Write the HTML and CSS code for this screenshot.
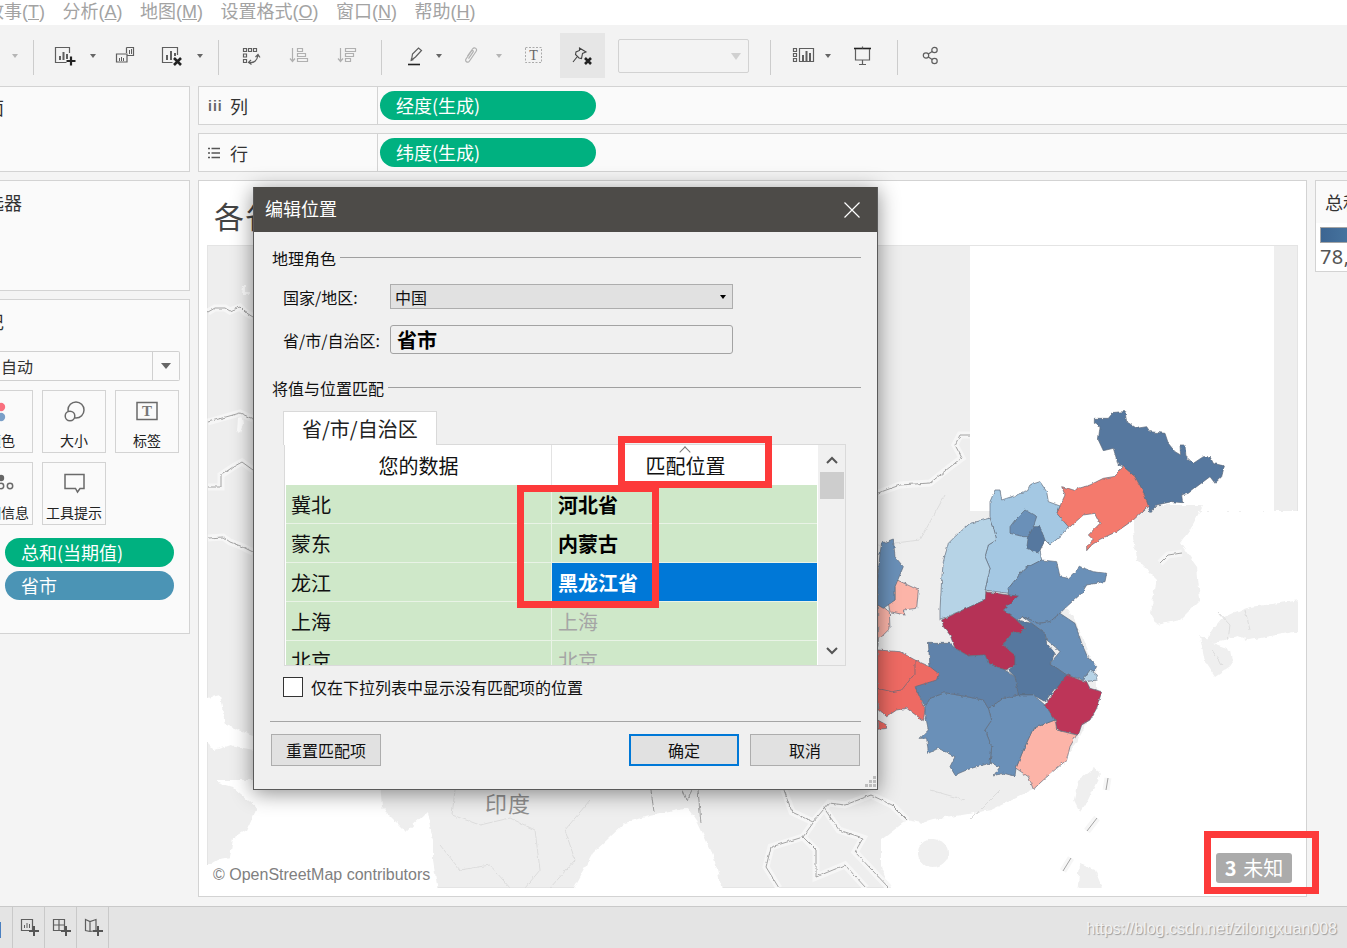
FILE: index.html
```html
<!DOCTYPE html>
<html lang="zh">
<head>
<meta charset="utf-8">
<title>编辑位置</title>
<link rel="stylesheet" href="styles.css">
</head>
<body>
<nav class="menu">
  <span class="menu-first">故事(<u>T</u>)</span><span>分析(<u>A</u>)</span><span>地图(<u>M</u>)</span><span>设置格式(<u>O</u>)</span><span>窗口(<u>N</u>)</span><span>帮助(<u>H</u>)</span>
</nav>

<div class="toolbar">
  <i class="arr g10 dim"></i>
  <b class="sep g13"></b>
  <svg class="ico g15" viewBox="0 0 30 30"><path class="s" d="M20.500 13V7.500h-14v15h11"/><path class="f" d="M10 16h2v4h-2zM13.500 12h2v8h-2zM17 14h2v5h-2z"/><path class="k" d="M22 16.500v9M17.500 21h9"/></svg>
  <i class="arr g9"></i>
  <svg class="ico g11" viewBox="0 0 30 30"><path class="s" d="M17.500 7.500h7v8h-6M17.500 13V7.500M7.500 14h10.500v8h-10.500z"/><path class="f" d="M20 10h1v4h-1zM22 9h1v5h-1zM10 18h1v3h-1zM12 17h1v4h-1zM14 18h1v3h-1z"/></svg>
  <svg class="ico g16" viewBox="0 0 30 30"><path class="s" d="M22.500 15V7.500h-15v15h10"/><path class="f" d="M11 15h2v5h-2zM15 11h2v9h-2zM19 13h2v3h-2z"/><path class="k x" d="M19 18l7 7M26 18l-7 7"/></svg>
  <i class="arr g10"></i>
  <b class="sep g13"></b>
  <svg class="ico g16" viewBox="0 0 30 30"><path class="s" d="M8.500 8.500h3v3h-3zM13.500 8.500h3v3h-3zM18.500 8.500h3v3h-3zM8.500 14h3v3h-3zM8.500 19.500h3v3h-3zM14 22.500c5 1 8-2 9-7M20.500 17l2.500-2.500 2 3M16 20l-2.500 2.500 3 2"/></svg>
  <svg class="ico g18 faint" viewBox="0 0 30 30"><path class="s" d="M9.500 8v13M7 18.500l2.500 3 2.500-3M14.500 8.500h5v3h-5zM14.500 13.500h8v3h-8zM14.500 18.500h10v3h-10z"/></svg>
  <svg class="ico g18 faint" viewBox="0 0 30 30"><path class="s" d="M9.500 8v13M7 18.500l2.500 3 2.500-3M14.500 8.500h10v3h-10zM14.500 13.500h8v3h-8zM14.500 18.500h5v3h-5z"/></svg>
  <b class="sep g20"></b>
  <svg class="ico g16" viewBox="0 0 30 30"><path class="s" d="M13.500 20l1-6 6-6 3 2.500-6 6.500z"/><path class="f" d="M13 18l3 2-3.500 1z"/><path class="k thin" d="M10 24.500h12"/></svg>
  <i class="arr g6"></i>
  <svg class="ico g12 faint" viewBox="0 0 30 30"><path class="s" d="M11.500 16l5-7c2-2.500 5.500 0 3.500 2.500l-6.500 9.500c-1.500 2.500-5 .5-3.500-2l5.500-8c1-1.200 2.500 0 1.500 1.200l-4.500 6.500"/></svg>
  <i class="arr g8 dim"></i>
  <svg class="ico g14" viewBox="0 0 30 30"><rect class="dash" x="7.500" y="7.500" width="16" height="15"/><text class="ico-t" x="15.500" y="20">T</text></svg>
  <span class="pin g12"><svg class="pin-ico" viewBox="0 0 45 45"><path class="s thin-s" d="M19.500 15l6.500 4-3.500 1.500-1 5-2.500-.5-3.500-3.500.5-2.500 3.500-1.500zM17 24l-4 5"/><path class="k x" d="M25 25l6 6M31 25l-6 6"/></svg></span>
  <span class="tb-select g13"><i class="tb-caret"></i></span>
  <b class="sep g21"></b>
  <svg class="ico g17" viewBox="0 0 30 30"><path class="s" d="M5.500 8.500h3v3h-3zM5.500 13.500h3v3h-3zM5.500 18.500h3v3h-3zM11.500 8.500h14v13h-14z"/><path class="f" d="M14 15h2v6h-2zM17.500 11h2v10h-2zM21 13h2v8h-2z"/></svg>
  <i class="arr g5"></i>
  <svg class="ico g14" viewBox="0 0 30 30"><path class="k thin" d="M7 8.500h17"/><path class="s" d="M8.500 9v11h14V9M15.500 20v4.500M12 24.500h7M15.500 6.500v2"/></svg>
  <b class="sep g20"></b>
  <svg class="ico g17" viewBox="0 0 30 30"><circle class="s" cx="11" cy="15.500" r="2.700"/><circle class="s" cx="19.500" cy="10" r="2.700"/><circle class="s" cx="19.500" cy="21" r="2.700"/><path class="s" d="M13.300 14l3.900-2.600M13.300 17l3.900 2.600"/></svg>
</div>

<main class="main">
  <aside class="left">
    <section class="panel p-pages"><div class="clip-title">页面</div></section>
    <section class="panel p-filters"><div class="clip-title ft">筛选器</div></section>
    <section class="panel p-marks">
      <div class="clip-title mk">标记</div>
      <div class="mark-select"><span>自动</span><i class="ms-arrow"></i></div>
      <div class="mark-grid">
        <div class="mark-btn">
          <svg class="mi" viewBox="0 0 30 26"><circle class="c-r" cx="15" cy="7" r="4.200"/><circle class="c-b" cx="15" cy="17" r="4.200"/></svg>
          <span>颜色</span>
        </div>
        <div class="mark-btn">
          <svg class="mi" viewBox="0 0 30 26"><circle class="s2" cx="17" cy="10" r="8"/><circle class="s2 wb" cx="11" cy="16" r="4.800"/></svg>
          <span>大小</span>
        </div>
        <div class="mark-btn">
          <svg class="mi" viewBox="0 0 30 26"><rect class="s2" x="5" y="2.500" width="20" height="17"/><text class="mi-t" x="15" y="16">T</text></svg>
          <span>标签</span>
        </div>
        <div class="mark-btn">
          <svg class="mi" viewBox="0 0 30 26"><circle class="c-g" cx="15" cy="6" r="3.200"/><circle class="s2" cx="15" cy="14" r="2.700"/><circle class="s2" cx="24" cy="14" r="2.700"/><circle class="s2" cx="6" cy="14" r="2.700"/></svg>
          <span>详细信息</span>
        </div>
        <div class="mark-btn">
          <svg class="mi" viewBox="0 0 30 26"><path class="s2" d="M6 2.500h19v14h-4l-2.500 3.500-2-3.500h-10.500z"/></svg>
          <span>工具提示</span>
        </div>
      </div>
      <div class="pill green mark-pill">总和(当期值)</div>
      <div class="pill blue mark-pill">省市</div>
    </section>
  </aside>

  <div class="right">
    <div class="shelf">
      <div class="shelf-label"><span class="sh-ic">iii</span><span>列</span></div>
      <div class="pill green shelf-pill">经度(生成)</div>
    </div>
    <div class="shelf">
      <div class="shelf-label"><svg class="sh-svg" viewBox="0 0 12 12"><path d="M0 1.500h2M3.500 1.500h8.500M0 6h2M3.500 6h8.500M0 10.500h2M3.500 10.500h8.500"/></svg><span>行</span></div>
      <div class="pill green shelf-pill">纬度(生成)</div>
    </div>

    <div class="view-row">
      <section class="view">
        <h1 class="view-title">各省市</h1>
        <div class="map">
          <svg class="map-svg" viewBox="207 245 1091 643" width="1091" height="643">
            <defs>
              <filter id="rough" x="-5%" y="-5%" width="110%" height="110%" filterUnits="objectBoundingBox">
                <feTurbulence type="fractalNoise" baseFrequency=".16" numOctaves="2" seed="4" result="n"/>
                <feDisplacementMap in="SourceGraphic" in2="n" scale="5" xChannelSelector="R" yChannelSelector="G"/>
              </filter>
              <filter id="rough2" x="-5%" y="-5%" width="110%" height="110%">
                <feTurbulence type="fractalNoise" baseFrequency=".22" numOctaves="2" seed="9" result="n"/>
                <feDisplacementMap in="SourceGraphic" in2="n" scale="3" xChannelSelector="R" yChannelSelector="G"/>
              </filter>
            </defs>
            <rect class="land" x="207.500" y="245.500" width="1090" height="642"/>
            <g class="sea" filter="url(#rough)">
              <path d="M1040 511H1320V910H899L881 867 881 840 907 820 923 823 933 820 991 810 1033 790 1075 745 1098 700 1096 670 1075 620 1060 600 1040 560z"/>
              <path d="M562 910L593 853 625 823 641 818 688 808 698 823 714 857 727 910z"/>
              <path d="M217 782L233 787 257 808 247 830 233 838 230 857 217 860 200 870 200 910H441L433 860 433 840 427 812 406 832 382 808 380 780H217z"/>
              <path d="M200 700L220 695 225 725 253 735 253 750 230 745 215 750 200 735z"/>
              <path d="M243 286h2v6h5v2h-8zM238 418l4-1 1 7-3 9-3-2z"/>
            </g>
            <rect class="tile" x="970" y="246" width="304" height="265"/>
            <g class="land-fill" filter="url(#rough)">
              <path d="M1133 505H1203L1190 530 1180 543 1197 567 1200 600 1180 620 1157 625 1150 613 1157 580 1137 560 1133 530z"/>
              <path d="M1330 596L1250 607 1235 612 1222 618 1212 630 1203 645 1225 640 1238 636 1250 640 1330 625z"/>
              <path d="M1200 636L1218 646 1230 650 1233 665 1215 677 1205 662z"/>
              <path d="M1243 626L1258 622 1260 634 1245 642z"/>
              <path d="M1095 767L1100 775 1088 800 1080 812 1074 800 1078 780z"/>
              <path d="M1080 864L1095 870 1105 895H1077z"/>
              <ellipse cx="933" cy="853" rx="15" ry="14"/>
            </g>
            <g class="halo">
              <path id="b1" d="M208 312L215 308 225 308 230 311 240 307 245 312 253 317"/>
              <path id="b2" d="M208 422L240 413 253 419"/>
              <path id="b3" d="M208 487L221 487 221 475 233 467 242 462 253 470"/>
              <path id="b4" d="M208 538L223 537 230 542 243 547 253 552"/>
              <path id="b5" d="M878 493L900 485 930 483 950 467 962 458 955 445 960 435 970 435"/>
              <path id="b6" d="M784 790L792 812 813 822 829 803 845 805 871 795 892 805 907 820"/>
              <path id="b7" d="M813 823L803 837 771 847 766 867 779 888"/>
              <path id="b8" d="M824 808L839 830 863 838 855 852 889 888"/>
              <path id="b9" d="M803 837L816 850 816 877 845 865 866 888"/>
              <path id="b10" d="M1160 563L1168 555 1182 553"/>
              <path id="b11" d="M1097 818L1087 831M1071 858L1063 871M1108 778L1106 790"/>
            </g>
            <g class="border" filter="url(#rough2)">
              <use href="#b1"/><use href="#b2"/><use href="#b3"/><use href="#b4"/><use href="#b5"/><use href="#b6"/><use href="#b7"/><use href="#b8"/><use href="#b9"/><use href="#b10"/>
              <path d="M651 790L654 812M698 790L701 823M683 790L687 800 692 790"/>
            </g>
            <use class="border" href="#b11"/>
            <g class="border-light" filter="url(#rough2)">
              <path d="M455 790L452 815 480 825 510 818 535 830 540 870 525 888M590 800L565 830 575 860 550 888M440 845L460 870 490 865 510 888M1000 790L970 820M930 790L965 800M878 545L920 540 945 495"/>
              <path d="M1218 612L1230 625 1228 640M1245 610L1250 630M1212 650L1222 665"/>
            </g>
            <text class="map-label" x="485" y="812">印度</text>
            <g filter="url(#rough2)">
            <g class="prov" transform="translate(860 380) scale(.33333)">
              <path class="c-dk" d="M703 115L745 115 760 97 795 95 800 125 830 145 860 140 870 155 915 160 925 190 945 215 962 225 960 195 975 195 978 230 1000 250 1030 230 1050 230 1060 250 1093 258 1085 290 1065 310 1050 290 1010 320 985 340 965 345 968 368 935 365 890 375 870 398 850 335 825 290 790 260 775 255 760 205 730 212 715 180 720 140 703 130z"/>
              <path class="c-sal" d="M600 378L615 345 605 320 625 325 640 330 690 315 730 295 760 290 790 260 825 290 850 335 865 378 820 420 770 455 720 478 695 495 680 512 680 500 700 480 685 465 720 430 705 400 670 405 625 445 590 400z"/>
              <path class="c-lt" d="M390 365L405 330 420 330 425 360 470 345 500 335 510 315 540 305 560 335 565 365 600 378 590 400 625 440 600 470 570 495 555 480 540 510 545 540 490 570 445 625 445 640 375 630 390 565 375 530 385 495 410 480 400 440 390 410z"/>
              <path class="c-ltr" d="M250 545L265 490 290 465 330 430 390 415 400 440 410 480 385 495 375 530 390 565 375 630 375 660 320 685 240 718 240 690 245 600z"/>
              <path class="c-md" d="M450 440L465 420 495 390 530 410 520 440 525 470 490 470 450 460z"/>
              <path class="c-dk" d="M520 440L540 440 555 480 535 520 500 505 505 470z"/>
              <path class="c-md" d="M445 625L495 565 545 540 590 545 600 590 625 595 660 560 700 575 740 580 735 605 680 615 665 640 620 680 600 700 570 725 535 730 490 710 470 720 430 690 445 670 470 650 445 645z"/>
              <path class="c-crim" d="M245 720L320 685 375 660 378 635 445 645 475 648 430 690 470 720 495 745 480 760 460 755 430 795 465 825 465 855 435 870 385 850 375 825 325 828 285 805 270 765 250 740z"/>
              <path class="c-md" d="M490 710L535 730 570 725 600 700 645 730 665 790 680 825 710 860 700 875 670 900 620 885 570 850 600 815 585 800 560 780 555 760 515 730z"/>
              <path class="c-dk" d="M470 720L515 730 555 760 560 790 585 820 570 850 620 885 610 915 585 925 555 965 520 945 475 945 465 890 445 870 465 855 465 825 430 795 460 755 480 760 495 745z"/>
              <path class="c-ltr" d="M690 870L712 885 710 900 680 905 672 895z"/>
              <path class="c-crim2" d="M620 885L660 900 680 905 690 925 725 935 710 985 690 1020 665 1035 655 1065 590 1050 585 1020 555 975 590 925z"/>
              <path class="c-pink" d="M585 1020L590 1050 650 1065 630 1100 620 1140 590 1165 550 1200 520 1228 505 1190 468 1165 490 1110 520 1045z"/>
              <path class="c-md" d="M385 985L430 955 475 945 520 945 555 975 585 1020 520 1045 490 1110 468 1165 465 1188 430 1180 400 1188 420 1160 390 1150 395 1100 375 1050 395 1020z"/>
              <path class="c-md" d="M195 980L210 955 255 938 320 950 370 960 385 985 395 1020 375 1050 395 1100 390 1150 350 1160 320 1170 285 1185 270 1160 285 1130 235 1105 205 1120 200 1075 180 1075 205 1050 195 1000z"/>
              <path class="c-hb" d="M205 790L270 790 285 805 325 828 375 825 385 850 435 870 465 890 475 945 430 955 385 985 370 960 320 950 255 938 210 955 195 980 165 925 210 860z"/>
              <path class="c-red" d="M53 810L120 815 165 840 210 860 235 880 230 900 165 920 195 990 190 1022 140 985 110 990 80 1010 53 985z"/>
              <path class="c-red-line" d="M165 840L165 880 125 930 95 935 53 925"/>
              <path class="c-red" d="M53 1020L80 1035 80 1045 53 1048z"/>
              <path class="c-pink" d="M53 668L88 695 90 745 55 780 53 800z"/>
              <path class="c-pink" d="M95 592L175 630 170 685 130 690 135 705 90 695 85 670 105 660 105 620 85 610z"/>
              <path class="c-md" d="M65 490L100 477 105 530 130 560 105 620 105 660 70 685 53 675 53 600 60 520z"/>
            </g>
            </g>
          </svg>
          <div class="osm">© OpenStreetMap contributors</div>
          <div class="badge"><b>3</b> 未知</div>
        </div>
      </section>
      <section class="legend">
        <div class="legend-title">总和(当期值)</div>
        <div class="legend-bar"></div>
        <div class="legend-val">78,000</div>
      </section>
    </div>
  </div>
</main>

<footer class="tabs">
  <i class="tab-mark"></i>
  <span class="tab-cell"><svg class="tab-ic" viewBox="0 0 20 20"><path class="s" d="M2.500 2.500h11v11h-11z"/><path class="f" d="M5 8h1v3H5zM7.500 6h1v5h-1zM10 7h1v4h-1z"/><path class="pl" d="M15 9v10M10 14h10"/></svg></span>
  <span class="tab-cell"><svg class="tab-ic" viewBox="0 0 20 20"><path class="s" d="M2.500 2.500h11v11h-11zM2.500 8h11M8 2.500v11"/><path class="pl" d="M15 9v10M10 14h10"/></svg></span>
  <span class="tab-cell"><svg class="tab-ic" viewBox="0 0 20 20"><path class="s" d="M2.500 2.500l4.500 2 6-2v11l-6 1-4.500-1zM7 4.500v10"/><path class="pl" d="M15 9v10M10 14h10"/></svg></span>
  <span class="watermark">https://blog.csdn.net/zilongxuan008</span>
</footer>

<div class="dialog">
  <header class="dlg-head">
    <span>编辑位置</span>
    <svg class="dlg-close" viewBox="0 0 16 16"><path d="M.5.500l15 15M15.500.500l-15 15"/></svg>
  </header>
  <div class="dlg-body">
    <div class="legendline">地理角色</div>
    <div class="form-row r1">
      <label>国家/地区:</label>
      <div class="combo"><span>中国</span><i class="combo-arrow"></i></div>
    </div>
    <div class="form-row r2">
      <label>省/市/自治区:</label>
      <div class="readonly">省市</div>
    </div>
    <div class="legendline l2">将值与位置匹配</div>
    <div class="tab">省/市/自治区</div>
    <div class="table">
      <div class="tbl">
        <div class="tr th"><div class="td">您的数据</div><div class="td sorted">匹配位置</div></div>
        <div class="tr"><div class="td">冀北</div><div class="td strong">河北省</div></div>
        <div class="tr"><div class="td">蒙东</div><div class="td strong">内蒙古</div></div>
        <div class="tr"><div class="td">龙江</div><div class="td strong sel">黑龙江省</div></div>
        <div class="tr"><div class="td">上海</div><div class="td muted">上海</div></div>
        <div class="tr"><div class="td">北京</div><div class="td muted">北京</div></div>
      </div>
      <div class="scroll">
        <svg class="sb-arrow" viewBox="0 0 14 10"><path d="M2 8l5-5 5 5"/></svg>
        <div class="thumb"></div>
        <svg class="sb-arrow down" viewBox="0 0 14 10"><path d="M2 2l5 5 5-5"/></svg>
      </div>
    </div>
    <label class="check"><i class="box"></i><span>仅在下拉列表中显示没有匹配项的位置</span></label>
    <div class="dlg-foot">
      <button class="btn">重置匹配项</button>
      <button class="btn primary">确定</button>
      <button class="btn">取消</button>
    </div>
    <svg class="grip" viewBox="0 0 12 12"><path d="M8 0h3v3H8zM4 4h3v3H4zM8 4h3v3H8zM0 8h3v3H0zM4 8h3v3H4zM8 8h3v3H8z"/></svg>
  </div>
  <i class="redbox rb1"></i>
  <i class="redbox rb2"></i>
</div>
<i class="redbox rb3"></i>
</body>
</html>
```
FILE: styles.css
```css
* { box-sizing: border-box; }
html, body { margin: 0; padding: 0; }
body {
  position: relative;
  width: 1347px;
  height: 948px;
  overflow: hidden;
  background: #f4f4f4;
  color: #2b2b2b;
  font-family: "Noto Sans CJK SC", "Noto Sans", sans-serif;
  display: flex;
  flex-direction: column;
}
i { display: block; font-style: normal; }

/* menu */
.menu {
  height: 25px;
  flex: none;
  background: #fff;
  display: flex;
  gap: 17.500px;
  align-items: center;
  font-family: "Liberation Sans", "Noto Sans CJK SC", sans-serif;
  font-size: 18px;
  line-height: 22px;
  color: #a3a3a3;
  white-space: nowrap;
  padding-bottom: 2px;
}
.menu-first { margin-left: -14px; }
.menu u { text-underline-offset: 1px; text-decoration-thickness: 1px; }

/* toolbar */
.toolbar {
  height: 61px;
  flex: none;
  display: flex;
  align-items: flex-start;
  padding-top: 15px;
  background: #f3f3f3;
}
.toolbar > * { flex: none; }
.ico { width: 30px; height: 30px; }
.s { fill: none; stroke: #5e5e5e; stroke-width: 1.2; }
.f { fill: #5e5e5e; }
.k { fill: none; stroke: #222; stroke-width: 2.2; }
.k.x { stroke-width: 2.6; }
.k.thin { stroke-width: 1.6; }
.thin-s { stroke: #444; stroke-width: 1.1; }
.faint .s { stroke: #b0b0b0; }
.dash { fill: none; stroke: #aaa; stroke-dasharray: 2 1.500; }
.ico-t { font-family: "Liberation Serif", serif; font-size: 14px; fill: #666; text-anchor: middle; }
.arr {
  width: 10px;
  height: 30px;
  display: flex;
  align-items: center;
  justify-content: center;
  padding-top: 1px;
}
.arr::before {
  content: "";
  width: 0;
  height: 0;
  border-left: 3.500px solid transparent;
  border-right: 3.500px solid transparent;
  border-top: 4px solid #666;
}
.arr.dim::before { border-top-color: #b5b5b5; }
.sep { width: 1px; height: 35px; background: #ccc; margin-top: 0; }
.pin { width: 45px; height: 45px; background: #e6e6e6; margin-top: -7px; }
.pin-ico { display: block; width: 45px; height: 45px; }
.tb-select {
  width: 131px;
  height: 34px;
  border: 1px solid #d2d2d2;
  border-radius: 2px;
  display: flex;
  align-items: center;
  justify-content: flex-end;
  padding-right: 7px;
  margin-top: -1px;
}
.tb-caret {
  width: 0; height: 0;
  border-left: 5.500px solid transparent;
  border-right: 5.500px solid transparent;
  border-top: 7px solid #d0d0d0;
}
.g5 { margin-left: 5px; }
.g6 { margin-left: 6px; }
.g8 { margin-left: 8px; }
.g9 { margin-left: 9px; }
.g10 { margin-left: 10px; }
.g11 { margin-left: 11px; }
.g12 { margin-left: 12px; }
.g13 { margin-left: 13px; }
.g14 { margin-left: 14px; }
.g15 { margin-left: 15px; }
.g16 { margin-left: 16px; }
.g17 { margin-left: 17px; }
.g18 { margin-left: 18px; }
.g20 { margin-left: 20px; }
.g21 { margin-left: 21px; }

/* main */
.main {
  flex: 1;
  min-height: 0;
  display: flex;
  gap: 8px;
}
.left {
  width: 190px;
  flex: none;
  display: flex;
  flex-direction: column;
  gap: 8px;
}
.panel {
  background: #fafafa;
  border: 1px solid #d3d3d3;
  border-left: 0;
  overflow: hidden;
  position: relative;
}
.p-pages { height: 86px; }
.p-filters { height: 111px; }
.p-marks { height: 335px; }
.clip-title {
  font-size: 18px;
  line-height: 24px;
  margin: 8px 0 0 -32px;
  white-space: nowrap;
  color: #333;
}
.clip-title.ft { margin: 9px 0 0 -32px; }
.clip-title.mk { margin: 9px 0 0 -32px; }
.mark-select {
  margin-top: 18px;
  width: 180px;
  height: 30px;
  border: 1px solid #d0d0d0;
  border-left: 0;
  border-radius: 0 2px 2px 0;
  background: #fafafa;
  display: flex;
  align-items: center;
  justify-content: space-between;
  font-size: 16px;
  padding: 0 0 1px 1px;
  color: #333;
}
.ms-arrow {
  width: 27px;
  height: 28px;
  border-left: 1px solid #d0d0d0;
  position: relative;
}
.ms-arrow::after {
  content: "";
  position: absolute;
  left: 8px;
  top: 11px;
  border-left: 5px solid transparent;
  border-right: 5px solid transparent;
  border-top: 6px solid #666;
}
.mark-grid {
  margin: 9px 0 0 -31px;
  display: grid;
  grid-template-columns: repeat(3, 64px);
  grid-auto-rows: 63px;
  gap: 9px;
}
.mark-btn {
  border: 1px solid #d3d3d3;
  background: #fafafa;
  display: flex;
  flex-direction: column;
  align-items: center;
  padding-top: 9px;
  font-size: 14px;
  line-height: 18px;
  color: #222;
  white-space: nowrap;
}
.mi { width: 30px; height: 26px; margin-bottom: 5px; flex: none; }
.c-r { fill: #f9707e; }
.c-b { fill: #7a9fc8; }
.c-g { fill: #666; }
.s2 { fill: none; stroke: #6a6a6a; stroke-width: 1.500; }
.s2.wb { fill: #fafafa; }
.mi-t { font-family: "Liberation Serif", serif; font-weight: 700; font-size: 15px; fill: #777; text-anchor: middle; }
.pill {
  color: #fff;
  font-size: 18px;
  line-height: 28px;
  height: 29px;
  border-radius: 15px;
  padding-left: 16px;
  white-space: nowrap;
}
.green { background: #00b180; }
.blue { background: #4b94b5; }
.mark-pill { width: 169px; margin-left: 5px; margin-bottom: 4px; }
.mark-grid + .mark-pill { margin-top: 13px; }

/* shelves */
.right {
  flex: 1;
  min-width: 0;
  display: flex;
  flex-direction: column;
  gap: 8px;
}
.shelf {
  display: flex;
  align-items: center;
  background: #fafafa;
  border: 1px solid #d3d3d3;
  border-right: 0;
  height: 39px;
  flex: none;
}
.shelf-label {
  width: 179px;
  height: 100%;
  border-right: 1px solid #d3d3d3;
  display: flex;
  align-items: center;
  gap: 10px;
  padding-left: 9px;
  font-size: 18px;
  color: #333;
  flex: none;
}
.sh-ic { font-size: 14px; font-weight: 700; letter-spacing: 1px; color: #666; font-family: "Liberation Sans", sans-serif; width: 12px; }
.sh-svg { width: 12px; height: 12px; flex: none; }
.sh-svg path { fill: none; stroke: #555; stroke-width: 1.600; }
.shelf-pill { width: 216px; margin-left: 2px; padding-left: 16px; }

/* view */
.view-row {
  display: flex;
  gap: 8px;
  align-items: flex-start;
  flex: none;
}
.view {
  width: 1109px;
  height: 717px;
  flex: none;
  background: #fff;
  border: 1px solid #d3d3d3;
  padding: 0 8px;
}
.view-title {
  margin: 0;
  height: 64px;
  padding: 11px 0 0 7px;
  font-size: 30px;
  font-weight: 400;
  line-height: 46px;
  color: #444;
  letter-spacing: 1px;
}
.map {
  position: relative;
  width: 1091px;
  height: 643px;
  overflow: hidden;
}
.map-svg { display: block; }
.land { fill: #eeeeee; stroke: #e4e4e4; }
.sea { fill: #fff; }
.tile { fill: #fff; }
.land-fill { fill: #efefef; }
.halo { fill: none; stroke: #f6f6f6; stroke-width: 7; }
.border { fill: none; stroke: #9a9a9a; stroke-width: .9; }
.border-light { fill: none; stroke: #dcdcdc; stroke-width: 1; }
.map-label { font-size: 22px; fill: #8f8f8f; letter-spacing: 1px; }
.prov path { stroke: #5f6a78; stroke-width: 2; stroke-linejoin: round; }
.c-dk { fill: #56789f; }
.c-md { fill: #6a90b8; }
.c-hb { fill: #5f82aa; }
.c-lt { fill: #a4c8e3; }
.c-ltr { fill: #b6d3e6; }
.c-sal { fill: #f47a6d; }
.c-crim { fill: #b53356; }
.c-crim2 { fill: #bd3659; }
.c-pink { fill: #fcb4a8; }
.c-red { fill: #ee6a64; }
.c-red-line { fill: none; }
.osm {
  position: absolute;
  left: 6px;
  bottom: 3px;
  font-family: "Liberation Sans", sans-serif;
  font-size: 16px;
  line-height: 20px;
  color: #808080;
}
.badge {
  position: absolute;
  left: 1009px;
  top: 608px;
  width: 76px;
  height: 30px;
  border-radius: 3px;
  background: #ababab;
  color: #fff;
  font-size: 20px;
  line-height: 30px;
  text-align: center;
  white-space: nowrap;
  word-spacing: 2px;
}

/* legend */
.legend {
  width: 60px;
  height: 92px;
  flex: none;
  background: #fff;
  border: 1px solid #d3d3d3;
  white-space: nowrap;
  overflow: hidden;
}
.legend-title {
  height: 42px;
  background: #fafafa;
  padding: 9px 0 0 9px;
  font-size: 18px;
  line-height: 24px;
  color: #333;
}
.legend-bar {
  margin: 4px 0 0 4px;
  height: 16px;
  background: linear-gradient(90deg, #3c6592, #4f80a9);
  border: 1px solid #a5a5a5;
}
.legend-val { padding-left: 4px; font-size: 20px; line-height: 28px; letter-spacing: .4px; color: #555; font-family: "Noto Sans", sans-serif; }

/* bottom tabs */
.tabs {
  height: 42px;
  flex: none;
  background: #e4e4e4;
  border-top: 1px solid #c9c9c9;
  display: flex;
  padding-left: 12px;
  position: relative;
}
.tab-mark {
  position: absolute;
  left: 0;
  top: 15px;
  width: 1px;
  height: 16px;
  background: #4a7fc0;
}
.tab-cell {
  width: 32px;
  border-left: 1px solid #c9c9c9;
  display: flex;
  align-items: center;
  justify-content: center;
  padding-bottom: 2px;
}
.tab-cell:nth-of-type(3) { border-right: 1px solid #c9c9c9; width: 33px; }
.tab-ic { width: 20px; height: 20px; }
.pl { fill: none; stroke: #555; stroke-width: 2; }
.watermark {
  margin-left: auto;
  padding: 11px 10px 0 0;
  font-family: "Liberation Sans", sans-serif;
  font-size: 16px;
  line-height: 22px;
  color: #f2f2f2;
  text-shadow: 1px 1px 1px #9a9a9a;
}

/* dialog */
.dialog {
  position: absolute;
  left: 253px;
  top: 187px;
  width: 625px;
  height: 603px;
  background: #f0f0f0;
  border: 1px solid #5a5a5a;
  border-top: 0;
  box-shadow: 0 3px 20px rgba(0, 0, 0, .45);
  color: #111;
  font-size: 16px;
}
.dlg-head {
  height: 45px;
  background: #4d4b48;
  color: #fff;
  display: flex;
  align-items: center;
  justify-content: space-between;
  padding: 0 17px 4px 11px;
  font-size: 18px;
}
.dlg-close { width: 16px; height: 16px; margin-top: 4px; }
.dlg-close path { fill: none; stroke: #fff; stroke-width: 1.200; }
.dlg-body { position: relative; padding: 14px 16px 0 18px; height: 557px; }
.legendline {
  display: flex;
  align-items: center;
  gap: 4px;
  line-height: 24px;
  height: 24px;
  margin-top: 0;
}
.legendline::after { content: ""; flex: 1; height: 1px; background: #a0a0a0; margin-top: -1px; }
.legendline.l2 { margin-top: 22px; }
.form-row { display: flex; align-items: center; padding-left: 11px; }
.form-row label { width: 107px; flex: none; white-space: nowrap; }
.r1 { margin-top: 14px; height: 25px; }
.r2 { margin-top: 16px; height: 29px; }
.combo {
  width: 343px;
  height: 25px;
  background: #e1e1e1;
  border: 1px solid #adadad;
  display: flex;
  align-items: center;
  justify-content: space-between;
  padding: 0 6px 0 4px;
}
.combo-arrow {
  width: 0; height: 0;
  border-left: 3.500px solid transparent;
  border-right: 3.500px solid transparent;
  border-top: 4px solid #000;
}
.readonly {
  width: 343px;
  height: 29px;
  border: 1px solid #a3a3a3;
  border-radius: 3px;
  padding-left: 6px;
  font-size: 20px;
  font-weight: 700;
  line-height: 28px;
  color: #000;
}
.tab {
  margin: 11px 0 0 11px;
  width: 154px;
  height: 34px;
  background: #fff;
  border: 1px solid #d9d9d9;
  border-bottom: 0;
  font-size: 20px;
  line-height: 34px;
  padding-left: 18px;
  white-space: nowrap;
  position: relative;
  z-index: 1;
  color: #222;
}
.table {
  margin: -1px 0 0 12px;
  width: 562px;
  height: 222px;
  background: #fff;
  border: 1px solid #dadada;
  display: flex;
  padding-left: 1px;
}
.tbl { width: 531px; height: 100%; overflow: hidden; flex: none; }
.tr {
  display: grid;
  grid-template-columns: 266px 265px;
  height: 39px;
  background: #cfe8c9;
  border-bottom: 1px solid #e9f3e6;
  font-size: 20px;
  color: #111;
}
.td { padding: 1px 0 0 5px; line-height: 38px; white-space: nowrap; overflow: hidden; }
.td:first-child { border-right: 1px solid #e9f3e6; }
.td + .td { padding-left: 6px; }
.th { background: #fff; height: 40px; border-bottom: 0; font-size: 20px; }
.th .td { text-align: center; padding: 1px 0 0; line-height: 40px; }
.th .td:first-child { border-right: 1px solid #e3e3e3; }
.th .sorted { padding-left: 2px; }
.sorted { position: relative; }
.sorted::before {
  content: "";
  position: absolute;
  left: 129px;
  top: 3px;
  width: 7px;
  height: 7px;
  border-left: 1px solid #777;
  border-top: 1px solid #777;
  transform: rotate(45deg);
}
.strong { font-weight: 700; color: #000; }
.sel { background: #0078d7; color: #fff; }
.muted { color: #a5a5a5; }
.scroll {
  flex: 1;
  margin-left: 1px;
  background: #f0f0f0;
  display: flex;
  flex-direction: column;
  align-items: center;
  padding: 10px 0 9px;
  position: relative;
}
.sb-arrow { width: 14px; height: 10px; flex: none; }
.sb-arrow path { fill: none; stroke: #555; stroke-width: 2; }
.sb-arrow.down { margin-top: auto; }
.thumb { width: 24px; height: 27px; background: #cdcdcd; margin-top: 7px; }
.check {
  display: flex;
  align-items: center;
  gap: 8px;
  margin: 11px 0 0 11px;
  height: 20px;
  white-space: nowrap;
}
.box { width: 20px; height: 20px; background: #fff; border: 1px solid #333; flex: none; }
.dlg-foot {
  margin: 24px 0 0 -2px;
  padding-top: 12px;
  border-top: 1px solid #a5a5a5;
  display: flex;
  width: 591px;
}
.btn {
  width: 110px;
  height: 32px;
  background: #e1e1e1;
  border: 1px solid #adadad;
  font: inherit;
  color: #111;
  padding: 0;
  margin-left: 1px;
}
.btn.primary { margin-left: 248px; border: 2px solid #0078d7; }
.btn.primary + .btn { margin-left: 11px; }
.grip { position: absolute; right: 0; bottom: 1px; width: 12px; height: 12px; }
.grip path { fill: #bdbdbd; }

/* annotation rectangles */
.redbox { position: absolute; border: 7px solid #fd3a3a; pointer-events: none; }
.rb1 { left: 364px; top: 249px; width: 154px; height: 52px; }
.rb2 { left: 263px; top: 298px; width: 142px; height: 123px; }
.rb3 { left: 1204px; top: 831px; width: 115px; height: 63px; }
```
